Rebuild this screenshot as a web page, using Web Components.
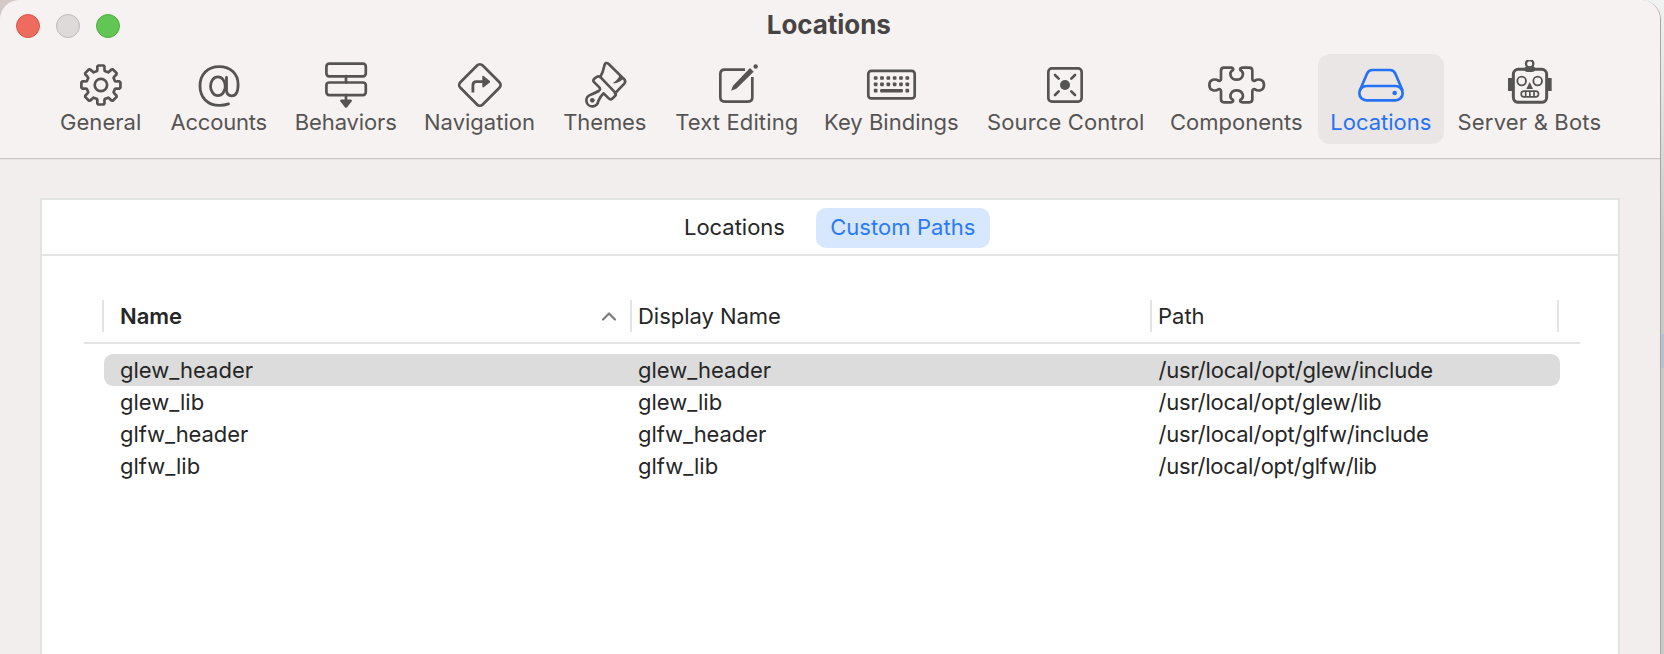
<!DOCTYPE html>
<html lang="en">
<head>
<meta charset="utf-8">
<title>Locations</title>
<style>
html,body{margin:0;height:100%;overflow:hidden}
body{font-family:Inter,"Liberation Sans",sans-serif;font-size:22px;background:linear-gradient(#b7c0cf,#b7c0cf) 1660px 334px/4px 34px no-repeat,linear-gradient(90deg,#d3cac8,#d3cac8) 0 0/800px 100% no-repeat,linear-gradient(#f1f2f2 0,#e4e5e5 80px,#c8cac8 240px)}
</style>
</head>
<body>
<prefs-window></prefs-window>
<script>
const define = (name, html, setup) => {
  const t = document.createElement('template');
  t.innerHTML = html;
  customElements.define(name, class extends HTMLElement {
    connectedCallback() {
      if (this.shadowRoot) return;
      this.attachShadow({mode: 'open'}).append(t.content.cloneNode(true));
      if (setup) setup.call(this, this.shadowRoot);
    }
  });
};

// Text tracked so that its visible width equals the "w" attribute.
const ctx = document.createElement('canvas').getContext('2d');
define('fit-text', `<style>:host{display:block;white-space:nowrap;line-height:28px;flex:none}span{display:block}</style><span><slot></slot></span>`, function (root) {
  const w = +this.getAttribute('w'), size = this.getAttribute('size') || 22, weight = this.getAttribute('weight') || 400;
  const text = this.textContent;
  ctx.font = `${weight} ${size}px Inter`;
  const m = ctx.measureText(text);
  const ink = m.actualBoundingBoxRight + m.actualBoundingBoxLeft;
  this.style.cssText = `width:${w}px;font-size:${size}px;font-weight:${weight}`;
  const s = root.querySelector('span').style;
  s.letterSpacing = (w - ink) / (text.length - 1) + 'px';
  s.marginLeft = m.actualBoundingBoxLeft + 'px';
});

const gear = () => {
  const p = [], at = (r, a) => `${(r * Math.sin(a * Math.PI / 180)).toFixed(2)} ${(-r * Math.cos(a * Math.PI / 180)).toFixed(2)}`;
  for (let i = 0; i < 8; i++) {
    const a = i * 45;
    p.push(at(14.6, a - 15), at(16.3, a - 12.5), at(18.7, a - 11), at(19.7, a - 8), at(19.7, a + 8), at(18.7, a + 11), at(16.3, a + 12.5), at(14.6, a + 15));
  }
  return `<path d="M${p.join('L')}Z"/><circle r="6.2"/>`;
};
const third = (x, y, body) => `<g transform="translate(${x},${y}) scale(.33333)" stroke-width="8">${body}</g>`;
const keys = () => {
  let s = '';
  for (const y of [-7, -.7, 5.7]) for (let i = 0; i < 6; i++)
    if (y < 5 || i === 0 || i === 5) s += `<rect class="f" x="${-15.83 + i * 6.33 - 1.85}" y="${y - 1.85}" width="3.7" height="3.7" rx=".8"/>`;
  return s + '<rect class="f" x="-11.4" y="4" width="22.8" height="3.4" rx="1"/>';
};
const ICONS = {
  gear: `<g transform="translate(.4 0)">${gear()}</g>`,
  at: '<path stroke-width="2.8" d="M10 18.9C7 20 4 20.4 1 20.4C-11 20.4-18.5 12.3-18.5.9C-18.5-10.5-11-18.4.8-18.4C12-18.4 19.6-11 19.6-.5C19.6 6.5 17.5 10.8 13.3 10.8C10 10.8 8 9 8 5V-7.6"/><ellipse stroke-width="2.8" cx="-.6" cy="1.2" rx="7.4" ry="9.4"/>',
  behaviors: '<rect x="-19.6" y="-21.3" width="39.4" height="12.6" rx="2.8"/><rect x="-19.6" y="-2.5" width="39.4" height="12.6" rx="2.8"/><path d="M0-9V-2.5M0 10V15"/><path class="f" d="M-5 14.6H5Q6.6 15 5.6 16.4L1.1 22.2Q0 23.2-1.1 22.2L-5.6 16.4Q-6.6 15-5 14.6Z"/>',
  navigation: '<rect x="-15.8" y="-15.8" width="31.6" height="31.6" rx="4" transform="translate(.4 0) rotate(45)"/><path stroke-width="2.8" stroke-linecap="butt" d="M-6.6 7.6V.2Q-6.6-3.3-3.1-3.3H4"/><path class="f" d="M2.8-8.4Q3-9.6 4.2-8.9L10.3-4.1Q11-3.3 10.3-2.6L4.2 2.2Q3 2.9 2.8 1.7Z"/>',
  themes: third(-65, -85, '<path d="M181 231Q190 214 193 197Q196 184 206 192L253 238Q258 245 253 251L225 280"/><path d="M163 247Q157 241 163 236L170 231Q176 227 182 232L225 277Q230 283 225 288L217 296Q211 300 206 295L191 280Q181 289 175 303A18 18 0 1 1 152 284Q166 279 176 273Q183 268 178 262ZM180 232"/><circle class="f" cx="157" cy="301" r="7"/><path class="f" d="M240 222L250 236Q236 250 218 250Q236 238 240 222Z"/>'),
  edit: third(-196.5, -85, '<path stroke-linecap="butt" d="M615 209H554Q541 209 541 222V292Q541 305 554 305H624Q637 305 637 292V231"/><path class="f" d="M573 272L579 257L630 204L641 215L589 266Z"/><circle class="f" cx="647" cy="199.500" r="6.500"/>'),
  keyboard: '<rect x="-23.2" y="-14.2" width="46.4" height="27.6" rx="3"/>' + keys(),
  source: third(-185.500, -45, '<rect x="505" y="85" width="100" height="100" rx="11"/><circle class="f" cx="555" cy="135" r="15"/><path d="M525 105L536 116M585 105L574 116M525 165L536 154M585 165L574 154"/>'),
  puzzle: third(-76.5, -45, '<path d="M183 116V92Q183 83 192 83H214Q222 84 219 90C205 98 211 119 230 119C249 119 255 98 241 90Q239 84 247 83H268Q277 83 277 92V116Q277 124 285 122C293 116 312 117 312 135C312 153 293 154 285 148Q277 146 277 154V178Q277 187 268 187H247Q239 187 241 180C255 172 249 151 230 151C211 151 205 172 219 180Q221 187 213 187H192Q183 187 183 178V154Q183 146 175 148C167 154 148 153 148 135C148 117 167 116 175 122Q183 124 183 116Z"/>'),
  drive: third(-221, -45, '<rect x="598" y="138" width="130" height="43" rx="21.5"/><path d="M600 150L621 101Q626 90 637 90H690Q701 90 706 101L727 150"/><circle class="f" cx="704" cy="159" r="7"/>'),
  robot: third(-109.5, -85, '<rect stroke-width="9" x="280" y="208" width="100" height="99" rx="15"/><path class="f" d="M264 234H277V273H264ZM383 234H395V273H383ZM312 206L318 199H341L347 206Q345 216 335 216H323Q313 216 312 206Z"/><circle style="fill:#f6f2f1" stroke-width="7" cx="329" cy="191" r="11"/><circle stroke-width="5.5" cx="305" cy="243" r="13"/><circle stroke-width="5.5" cx="353" cy="243" r="13"/><path class="f" d="M329 246L339 267H319Z"/><path stroke-width="5" d="M312 273.500H347A8.500 8.500 0 0 1 347 290.500H312A8.500 8.500 0 0 1 312 273.500ZM317 274V290M329.500 274V290M342 274V290"/>')
};

define('tool-icon', `<style>:host{display:block;height:50px}svg{display:block;fill:none;stroke:currentColor;stroke-width:2.7;stroke-linecap:round;stroke-linejoin:round}.f{fill:currentColor;stroke:none}</style><svg width="60" height="50" viewBox="-30 -25 60 50"></svg>`, function (root) {
  const svg = root.querySelector('svg');
  svg.innerHTML = ICONS[this.getAttribute('name')];
  // Items of odd width put the icon on a half pixel, which is rounded up.
  if (this.hasAttribute('half')) svg.setAttribute('viewBox', '-29.5 -25 60 50');
});

define('tool-item', `<style>
:host{display:flex;flex-direction:column;align-items:center;flex:none;box-sizing:border-box;height:90px;padding-top:6px;border-radius:12px;color:#565453}
:host([selected]){background:#eae6e5;color:#2672f5}
fit-text{margin-top:-2px}
</style><div></div>`, function (root) {
  const w = +this.getAttribute('w');
  this.style.width = w + 'px';
  const t = document.createElement('template');
  t.innerHTML = `<tool-icon name="${this.getAttribute('icon')}"${w % 2 ? ' half' : ''}></tool-icon><fit-text w="${this.getAttribute('tw')}">${this.getAttribute('label').replace('&', '&amp;')}</fit-text>`;
  root.querySelector('div').replaceWith(t.content);
});

define('window-lights', `<style>:host{display:flex;gap:16px;position:absolute;left:16px;top:14px}i{width:24px;height:24px;border-radius:50%;box-sizing:border-box;border:1px solid #dc5347;background:#ed6b5f}i+i{background:#dedad9;border-color:#bebaba}i+i+i{background:#62c655;border-color:#52ae42}</style><i></i><i></i><i></i>`);

define('tool-bar', `<style>
:host{display:flex;flex-direction:column;height:158px;background:#f6f2f1;border-bottom:1px solid #c9c6c5;box-shadow:0 1px #e8e4e3;position:relative}
.title{height:54px;display:flex;justify-content:center;color:#474443;box-sizing:border-box;padding:11px 2px 0 0}
.items{display:flex;gap:4px;padding-left:45px}
</style><window-lights></window-lights>
<div class="title"><fit-text w="122.500" size="26" weight="700">Locations</fit-text></div>
<div class="items">
<tool-item w="111" tw="79" icon="gear" label="General"></tool-item>
<tool-item w="117" tw="96" icon="at" label="Accounts"></tool-item>
<tool-item w="130" tw="100.500" icon="behaviors" label="Behaviors"></tool-item>
<tool-item w="129" tw="109" icon="navigation" label="Navigation"></tool-item>
<tool-item w="114" tw="81.500" icon="themes" label="Themes"></tool-item>
<tool-item w="141" tw="120.500" icon="edit" label="Text Editing"></tool-item>
<tool-item w="161" tw="133" icon="keyboard" label="Key Bindings"></tool-item>
<tool-item w="179" tw="155" icon="source" label="Source Control"></tool-item>
<tool-item w="155" tw="131" icon="puzzle" label="Components"></tool-item>
<tool-item w="126" tw="99.500" icon="drive" label="Locations" selected></tool-item>
<tool-item w="163" tw="142" icon="robot" label="Server &amp; Bots"></tool-item>
</div>`);

define('segment-tabs', `<style>
:host{display:flex;height:54px;border-bottom:2px solid #e3e3e3;align-items:center;color:#262626;padding-left:643px;background:#fff}
.on{background:#d6e7fe;color:#2c7af7;border-radius:10px;height:40px;width:174px;margin:2px 0 0 31.700px;display:flex;align-items:center;justify-content:center}
.on fit-text{margin-top:-2px}
</style><fit-text w="99.300">Locations</fit-text><div class="on"><fit-text w="143.700">Custom Paths</fit-text></div>`);

define('path-row', `<style>
:host{display:grid;grid-template-columns:518px 519.500px 1fr;align-items:center;height:32px;margin:0 20px;padding-left:17px;border-radius:9px}
:host([selected]){background:#dcdcdc}
</style><slot></slot>`);

define('path-table', `<style>
:host{display:block;width:1496px;margin:44px 0 0 42px;color:#262626}
header{display:grid;grid-template-columns:528px 520px 407px 2px;height:32px;padding:0 0 10px 18px;border-bottom:2px solid #e3e3e3;margin-bottom:10px}
header>div{border-left:2px solid #e3e3e3;display:flex;align-items:center;padding-left:7px}
header>div:first-child{padding-left:17px}
svg{margin-left:419px}
</style>
<header><div><fit-text w="61" weight="600">Name</fit-text><svg width="16" height="12" viewBox="0 0 16 12" fill="none" stroke="#7d7d7d" stroke-width="2.200" stroke-linecap="round" stroke-linejoin="round"><path d="M2 9.500L8 3.500L14 9.500"/></svg></div><div><fit-text w="141">Display Name</fit-text></div><div><fit-text w="44.600">Path</fit-text></div><div style="padding:0"></div></header>
<path-row selected><fit-text w="131.700">glew_header</fit-text><fit-text w="131.700">glew_header</fit-text><fit-text w="273.800">/usr/local/opt/glew/include</fit-text></path-row>
<path-row><fit-text w="82.700">glew_lib</fit-text><fit-text w="82.700">glew_lib</fit-text><fit-text w="222.700">/usr/local/opt/glew/lib</fit-text></path-row>
<path-row><fit-text w="127">glfw_header</fit-text><fit-text w="127">glfw_header</fit-text><fit-text w="269.400">/usr/local/opt/glfw/include</fit-text></path-row>
<path-row><fit-text w="78.700">glfw_lib</fit-text><fit-text w="78.700">glfw_lib</fit-text><fit-text w="218">/usr/local/opt/glfw/lib</fit-text></path-row>`);

define('prefs-window', `<style>
:host{display:block;box-sizing:content-box;width:1660px;height:654px;background:#f2eeed;border-radius:20px 20px 0 0;overflow:hidden;border-right:1px solid #a5a5a5}
main{margin:39px 0 0 40px;width:1576px;height:480px;border:2px solid #e3e3e3;background:#fff}
</style><tool-bar></tool-bar><main><segment-tabs></segment-tabs><path-table></path-table></main>`);
</script>
</body>
</html>
